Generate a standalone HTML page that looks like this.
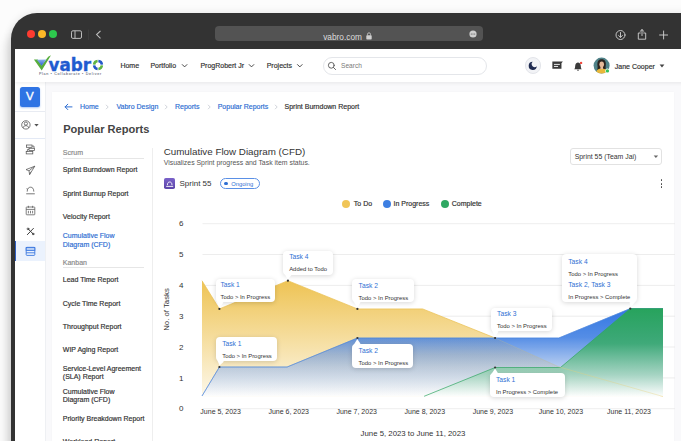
<!DOCTYPE html>
<html><head><meta charset="utf-8">
<style>
*{box-sizing:border-box;margin:0;padding:0}
html,body{width:681px;height:441px;overflow:hidden;background:#fcfcfc;font-family:"Liberation Sans",sans-serif;color:#333}
.abs{position:absolute}
#frame{position:absolute;left:11px;top:12.7px;width:700px;height:460px;background:#333;border-top-left-radius:26px;box-shadow:-5px 12px 9px rgba(0,0,0,.12),0 0 8px rgba(0,0,0,.10)}
#screen{position:absolute;left:15px;top:49px;width:670px;height:400px;background:#f9f9fb;overflow:hidden}
.t{position:absolute;white-space:nowrap;line-height:1;transform:translateY(calc(-50% + .2px))}
.f7{font-size:7px;-webkit-text-stroke:.18px currentColor}
.dot{position:absolute;border-radius:50%}
#hdr{position:absolute;left:0;top:0;width:670px;height:32.7px;background:#fff;box-shadow:0 1px 4px rgba(0,0,0,.08)}
#side{position:absolute;left:0;top:32px;width:30.6px;height:370px;background:#fff;border-right:1px solid #eef0f3}
#card{position:absolute;left:37px;top:39px;width:623px;height:370px}
#cardbg{position:absolute;left:36.5px;top:43px;width:622.3px;height:370px;background:#fff;box-shadow:0 0 2px rgba(0,0,0,.03)}
.blue{color:#2f6fd3}
.tip{position:absolute;background:#fff;border-radius:4px;box-shadow:0 1px 5px rgba(0,0,0,.16)}
.tip .a{position:absolute;font-size:6.7px;color:#2f6fd3;white-space:nowrap;line-height:1;transform:translateY(calc(-50% + .6px))}
.tip .b{position:absolute;font-size:5.9px;color:#333;white-space:nowrap;line-height:1;transform:translateY(calc(-50% + 1px))}
</style></head><body>
<div id="frame"></div>
<!-- browser chrome -->
<div class="dot" style="left:26.5px;top:30px;width:8px;height:8px;background:#fe3b30"></div>
<div class="dot" style="left:37.7px;top:30px;width:8px;height:8px;background:#fdb827"></div>
<div class="dot" style="left:48.9px;top:30px;width:8px;height:8px;background:#2dc84d"></div>
<svg class="abs" style="left:70px;top:29px" width="36" height="12" viewBox="0 0 36 12" fill="none" stroke="#bdbdbd" stroke-width="1">
<rect x="1.5" y="1.8" width="10" height="7.6" rx="1.4"/><line x1="5" y1="1.8" x2="5" y2="9.4"/>
<line x1="18.5" y1="0.5" x2="18.5" y2="11" stroke="#444" stroke-width=".6"/>
<polyline points="30.5,1.8 26.6,5.6 30.5,9.4" stroke-width="1.1"/>
</svg>
<div class="abs" style="left:214.5px;top:26px;width:268.5px;height:15px;border-radius:4px;background:#535353"></div>
<div class="t" style="left:323.2px;top:37.4px;font-size:8.3px;color:#dcdcdc">vabro.com</div>
<svg class="abs" style="left:366.3px;top:32px" width="6" height="8" viewBox="0 0 6 8"><rect x=".3" y="3.2" width="5.4" height="4.3" rx=".7" fill="#d0d0d0"/><path d="M1.5 3.4V2.3a1.5 1.5 0 0 1 3 0v1.1" fill="none" stroke="#d0d0d0" stroke-width=".8"/></svg>
<svg class="abs" style="left:469px;top:29.5px" width="8" height="8" viewBox="0 0 8 8"><circle cx="4" cy="4" r="3.6" fill="#cfcfcf"/><circle cx="2.3" cy="4" r=".55" fill="#535353"/><circle cx="4" cy="4" r=".55" fill="#535353"/><circle cx="5.7" cy="4" r=".55" fill="#535353"/></svg>
<svg class="abs" style="left:611px;top:27.5px" width="64" height="14" viewBox="0 0 64 14" fill="none" stroke="#d2d2d2" stroke-width=".9" stroke-linecap="round" stroke-linejoin="round">
<circle cx="9.5" cy="7" r="4.5"/><path d="M9.5 4.5v4.7M7.6 7.5l1.9 1.9 1.9-1.9"/>
<path d="M29.3 5h-2v6.2h7.4V5h-2M31 1.6v6M29.1 3.4L31 1.6l1.9 1.8"/>
<path d="M52.6 3v8M48.6 7h8"/>
</svg>

<div id="screen">
<div id="side">
  <!-- side coords: relative to side (x-15, y-81) -->
  <div class="abs" style="left:5px;top:5.7px;width:20px;height:20px;border-radius:2.5px;background:#2f74e4;box-shadow:0 1px 2px rgba(47,116,228,.4)"></div>
  <div class="t" style="left:10.9px;top:16.1px;font-size:11.5px;font-weight:normal;-webkit-text-stroke:.35px #fff;color:#fff">V</div>
  <div class="abs" style="left:0;top:29.8px;width:30px;height:1px;background:#e8ebf2"></div>
  <svg class="abs" style="left:5px;top:38px" width="22" height="12" viewBox="0 0 22 12" fill="none" stroke="#555" stroke-width=".8"><circle cx="5.9" cy="5.9" r="4.2"/><circle cx="5.9" cy="4.6" r="1.6"/><path d="M3 8.9 C3.4 7.2 4.6 6.7 5.9 6.7 C7.2 6.7 8.4 7.2 8.8 8.9"/><path d="M14.3 4.9 H18.7 L16.5 7.4 Z" fill="#555" stroke="none"/></svg>
  <div class="abs" style="left:0;top:57px;width:30px;height:1px;background:#e3e9f5"></div>
  <!-- icon1 gantt -->
  <svg class="abs" style="left:10px;top:62.5px" width="11" height="11" viewBox="0 0 11 11" fill="none" stroke="#555" stroke-width=".75"><rect x="1.6" y="1" width="5.4" height="2.3"/><rect x="4" y="4.3" width="5.6" height="2.3"/><rect x="1.2" y="7.6" width="6.6" height="2.3"/><path d="M7 2.1 H9 V4.3M4 5.4 H2.4 V7.6"/></svg>
  <!-- icon2 rocket -->
  <svg class="abs" style="left:10px;top:83.5px" width="11" height="11" viewBox="0 0 11 11" fill="none" stroke="#555" stroke-width=".75" stroke-linejoin="round"><path d="M9.8 1.2 L1 4.6 L4 5.8 L4.6 9.6 L9.8 1.2 Z M4 5.8 L9.8 1.2 M4.6 9.6 L5.6 6.8"/></svg>
  <!-- icon3 -->
  <svg class="abs" style="left:10px;top:103.6px" width="11" height="11" viewBox="0 0 11 11" fill="none" stroke="#555" stroke-width=".8"><path d="M2.4 4.6 L1.8 3.4 M2.2 6.6 C2.2 3.2 4 2.2 5.6 2.2 C7.4 2.2 8.8 3.6 8.8 6.6 M1.2 8.8 H9.8"/></svg>
  <!-- icon4 calendar -->
  <svg class="abs" style="left:10px;top:124px" width="11" height="11" viewBox="0 0 11 11" fill="none" stroke="#555" stroke-width=".75"><rect x="1.2" y="2" width="8.6" height="7.8" rx=".6"/><path d="M1.2 4.4 H9.8 M3.4 0.8 V2.8 M7.6 0.8 V2.8 M3.4 5.8 V8.4 M5.5 5.8 V8.4 M7.6 5.8 V8.4"/></svg>
  <!-- icon5 -->
  <svg class="abs" style="left:10.6px;top:145.6px" width="9" height="9" viewBox="0 0 9 9" fill="none" stroke="#3a3a3a" stroke-width="1" stroke-linecap="round"><path d="M1.4 7.6 L7.4 1.4 M2.4 2.2 L7.2 7"/><circle cx="2" cy="1.9" r=".9" stroke-width=".8"/><circle cx="7.1" cy="7" r=".8" stroke-width=".8"/></svg>
  <!-- active -->
  <div class="abs" style="left:0;top:159.8px;width:30px;height:20.4px;background:#ebf2fd"></div>
  <div class="abs" style="left:-1px;top:159.8px;width:2.3px;height:20.4px;background:#2f5fc4"></div>
  <svg class="abs" style="left:10px;top:165px" width="11" height="11" viewBox="0 0 11 11" fill="none" stroke="#3b78e0" stroke-width=".9"><rect x="1.2" y="1.4" width="8.6" height="8" rx=".8"/><rect x="1.2" y="1.4" width="8.6" height="3" fill="#b9d0f6"/><path d="M1.2 6.8 H9.8"/></svg>
 </div>
<div id="cardbg"></div>
<div id="card">
<svg class="abs" style="left:12px;top:15px" width="9" height="8" viewBox="0 0 9 8" fill="none" stroke="#2f6fd3" stroke-width="1" stroke-linecap="round" stroke-linejoin="round"><path d="M8 3.9 H1.2 M3.8 1.2 L1.1 3.9 L3.8 6.6"/></svg>
<div class="t f7 blue" style="left:28.0px;top:18.4px;">Home</div>
<div class="t f7 blue" style="left:64.4px;top:18.4px;">Vabro Design</div>
<div class="t f7 blue" style="left:123.0px;top:18.4px;">Reports</div>
<div class="t f7 blue" style="left:165.7px;top:18.4px;">Popular Reports</div>
<div class="t f7" style="left:232.5px;top:18.4px;">Sprint Burndown Report</div>
<svg class="abs" style="left:53.2px;top:15.9px" width="4" height="6" viewBox="0 0 4 6" fill="none" stroke="#c4c8d0" stroke-width=".8"><path d="M1 .8 L3.2 3 L1 5.2"/></svg>
<svg class="abs" style="left:112.3px;top:15.9px" width="4" height="6" viewBox="0 0 4 6" fill="none" stroke="#c4c8d0" stroke-width=".8"><path d="M1 .8 L3.2 3 L1 5.2"/></svg>
<svg class="abs" style="left:154.5px;top:15.9px" width="4" height="6" viewBox="0 0 4 6" fill="none" stroke="#c4c8d0" stroke-width=".8"><path d="M1 .8 L3.2 3 L1 5.2"/></svg>
<svg class="abs" style="left:221.8px;top:15.9px" width="4" height="6" viewBox="0 0 4 6" fill="none" stroke="#c4c8d0" stroke-width=".8"><path d="M1 .8 L3.2 3 L1 5.2"/></svg>
<div class="t " style="left:11.2px;top:41.1px;font-size:11.1px;font-weight:bold;color:#454545">Popular Reports</div>
<div class="t f7" style="left:10.8px;top:64.4px;color:#8a8a8a">Scrum</div>
<div class="abs" style="left:10.8px;top:70px;width:81px;height:1px;background:#e6e6e6"></div>
<div class="t f7" style="left:10.8px;top:81.4px;">Sprint Burndown Report</div>
<div class="t f7" style="left:10.8px;top:104.6px;">Sprint Burnup Report</div>
<div class="t f7" style="left:10.8px;top:127.9px;">Velocity Report</div>
<div class="t f7 blue" style="left:10.8px;top:147.2px;">Cumulative Flow</div>
<div class="t f7 blue" style="left:10.8px;top:155.7px;">Diagram (CFD)</div>
<div class="t f7" style="left:10.8px;top:173.8px;color:#8a8a8a">Kanban</div>
<div class="abs" style="left:10.8px;top:179.2px;width:81px;height:1px;background:#e6e6e6"></div>
<div class="t f7" style="left:10.8px;top:191.4px;">Lead Time Report</div>
<div class="t f7" style="left:10.8px;top:214.5px;">Cycle Time Report</div>
<div class="t f7" style="left:10.8px;top:237.8px;">Throughput Report</div>
<div class="t f7" style="left:10.8px;top:260.8px;">WIP Aging Report</div>
<div class="t f7" style="left:10.8px;top:279.7px;">Service-Level Agreement</div>
<div class="t f7" style="left:10.8px;top:288.1px;">(SLA) Report</div>
<div class="t f7" style="left:10.8px;top:303.0px;">Cumulative Flow</div>
<div class="t f7" style="left:10.8px;top:311.3px;">Diagram (CFD)</div>
<div class="t f7" style="left:10.8px;top:330.4px;">Priority Breakdown Report</div>
<div class="t f7" style="left:10.8px;top:353.3px;">Workload Report</div>
<div class="abs" style="left:99.6px;top:60px;width:1px;height:340px;background:#eeeeee"></div>
<div class="t " style="left:111.7px;top:64.2px;font-size:9.8px;color:#333">Cumulative Flow Diagram (CFD)</div>
<div class="t " style="left:111.7px;top:75.0px;font-size:6.9px;color:#555">Visualizes Sprint progress and Task item status.</div>
<div class="abs" style="left:111.8px;top:90.2px;width:11.1px;height:11px;border-radius:1.8px;background:linear-gradient(#7a62c9,#5b44a8)"></div>
<svg class="abs" style="left:111.7px;top:90.5px" width="11.3" height="10.6" viewBox="0 0 11.3 10.6" fill="none" stroke="#fff" stroke-width=".9"><path d="M3.4 6.2 C3.4 3.8 4.4 3 5.7 3 C7 3 8 3.8 8 6.2 M2.2 7.4 H9.2"/></svg>
<div class="t " style="left:127.5px;top:96.0px;font-size:8px;color:#333">Sprint 55</div>
<div class="abs" style="left:168px;top:89.9px;width:40px;height:11.4px;border:.8px solid #5a90e6;border-radius:6px"></div>
<div class="dot" style="left:172.3px;top:93.6px;width:3.8px;height:3.8px;background:#2f6fd3"></div>
<div class="t " style="left:179.2px;top:96.9px;font-size:5.8px;color:#2f6fd3">Ongoing</div>
<div class="abs" style="left:518px;top:59.5px;width:92.4px;height:17.5px;border:1px solid #e2e2e2;border-radius:3px"></div>
<div class="t " style="left:522.7px;top:69.0px;font-size:6.9px;color:#333">Sprint 55 (Team Jai)</div>
<svg class="abs" style="left:601px;top:66.6px" width="6" height="4" viewBox="0 0 6 4"><path d="M0.7 0.6 H5.1 L2.9 3.1 Z" fill="#666"/></svg>
<div class="dot" style="left:290.3px;top:112.2px;width:8px;height:8px;background:#f0c557"></div>
<div class="dot" style="left:330.7px;top:112.2px;width:8px;height:8px;background:#3d7fe2"></div>
<div class="dot" style="left:389.0px;top:112.2px;width:8px;height:8px;background:#2fa862"></div>
<div class="t f7" style="left:301.8px;top:115.4px;">To Do</div>
<div class="t f7" style="left:341.5px;top:115.4px;">In Progress</div>
<div class="t f7" style="left:399.8px;top:115.4px;">Complete</div>
<div class="dot" style="left:608.65px;top:91.45px;width:1.7px;height:1.7px;background:#444"></div>
<div class="dot" style="left:608.65px;top:94.95px;width:1.7px;height:1.7px;background:#444"></div>
<div class="dot" style="left:608.65px;top:98.45px;width:1.7px;height:1.7px;background:#444"></div>
<!--CHART-->
<svg class="abs" style="left:0;top:0" width="623" height="353" viewBox="52 88 623 353" font-family="Liberation Sans, sans-serif">
<defs>
<linearGradient id="gy" x1="0" y1="280" x2="0" y2="397" gradientUnits="userSpaceOnUse"><stop offset="0" stop-color="#eec353"/><stop offset="1" stop-color="#fdf8ea"/></linearGradient>
<linearGradient id="gy2" x1="0" y1="337" x2="0" y2="397" gradientUnits="userSpaceOnUse"><stop offset="0" stop-color="#d9bc78" stop-opacity=".08"/><stop offset=".3" stop-color="#d9bc78" stop-opacity=".2"/><stop offset="1" stop-color="#f4e2b0" stop-opacity="0"/></linearGradient>
<linearGradient id="gb" x1="0" y1="308" x2="0" y2="397" gradientUnits="userSpaceOnUse"><stop offset="0" stop-color="#3076e2" stop-opacity="1"/><stop offset=".33" stop-color="#4a86e4" stop-opacity=".94"/><stop offset=".66" stop-color="#a9c4ee" stop-opacity=".85"/><stop offset="1" stop-color="#ffffff" stop-opacity=".9"/></linearGradient>
<linearGradient id="gg" x1="0" y1="308" x2="0" y2="397" gradientUnits="userSpaceOnUse"><stop offset="0" stop-color="#27a35c" stop-opacity="1"/><stop offset=".4" stop-color="#3cab70" stop-opacity=".92"/><stop offset=".75" stop-color="#9fd3ba" stop-opacity=".85"/><stop offset="1" stop-color="#ffffff" stop-opacity=".8"/></linearGradient>
</defs>
<line x1="202.5" y1="223.7" x2="675" y2="223.7" stroke="#e9e9e9" stroke-width=".8"/>
<text x="181.2" y="226.3" font-size="8" fill="#333" text-anchor="middle">6</text>
<line x1="202.5" y1="254.5" x2="675" y2="254.5" stroke="#e9e9e9" stroke-width=".8"/>
<text x="181.2" y="257.1" font-size="8" fill="#333" text-anchor="middle">5</text>
<line x1="202.5" y1="285.4" x2="675" y2="285.4" stroke="#e9e9e9" stroke-width=".8"/>
<text x="181.2" y="288.0" font-size="8" fill="#333" text-anchor="middle">4</text>
<line x1="202.5" y1="316.2" x2="675" y2="316.2" stroke="#e9e9e9" stroke-width=".8"/>
<text x="181.2" y="318.8" font-size="8" fill="#333" text-anchor="middle">3</text>
<line x1="202.5" y1="347.0" x2="675" y2="347.0" stroke="#e9e9e9" stroke-width=".8"/>
<text x="181.2" y="349.6" font-size="8" fill="#333" text-anchor="middle">2</text>
<line x1="202.5" y1="377.9" x2="675" y2="377.9" stroke="#e9e9e9" stroke-width=".8"/>
<text x="181.2" y="380.5" font-size="8" fill="#333" text-anchor="middle">1</text>
<line x1="202.5" y1="408.7" x2="675" y2="408.7" stroke="#e9e9e9" stroke-width=".8"/>
<text x="181.2" y="411.3" font-size="8" fill="#333" text-anchor="middle">0</text>
<text transform="translate(169.3,309.5) rotate(-90)" font-size="7.75" fill="#333" text-anchor="middle">No. of Tasks</text>
<polygon points="202,280.7 219.4,308.9 287.9,280.7 357.4,308.9 422.6,308.9 495.1,338 558.6,366.8 663,396.5 663,396.5 202,396.5" fill="url(#gy)"/>
<polyline points="202,280.7 219.4,308.9 287.9,280.7 357.4,308.9 422.6,308.9 495.1,338 558.6,366.8 663,396.5" fill="none" stroke="#e9bf4f" stroke-width=".7"/>
<polygon points="202,396 219.4,367 287.1,367 357.4,338 558.8,338 630.3,308.6 663,308.6 663,396.5 202,396.5" fill="url(#gb)"/>
<polyline points="202,396 219.4,367 287.1,367 357.4,338 558.8,338 630.3,308.6 663,308.6" fill="none" stroke="#4a84dc" stroke-width=".5"/>
<clipPath id="cb"><polygon points="202,396 219.4,367 287.1,367 357.4,338 558.8,338 630.3,308.6 663,308.6 663,396.5 202,396.5"/></clipPath>
<polygon points="202,280.7 219.4,308.9 287.9,280.7 357.4,308.9 422.6,308.9 495.1,338 558.6,366.8 663,396.5 663,396.5 202,396.5" fill="url(#gy2)" clip-path="url(#cb)"/>
<polyline points="202,396 219.4,367 287.1,367 357.4,338 558.8,338 630.3,308.6 663,308.6" fill="none" stroke="#4a84dc" stroke-width=".5"/>
<polygon points="424.1,396.3 495.1,367.5 560.5,367.5 630.3,308.6 663,308.6 663,396.5" fill="url(#gg)"/>
<polyline points="424.1,396.3 495.1,367.5 560.5,367.5 630.3,308.6 663,308.6" fill="none" stroke="#2fa561" stroke-width=".7"/>
<polyline points="495.1,338 558.6,366.8" fill="none" stroke="#c9c3a0" stroke-width=".5" stroke-opacity=".55"/>
<polyline points="558.6,366.8 663,396.5" fill="none" stroke="#e6d27f" stroke-width=".5" stroke-opacity=".75"/>
<circle cx="219.4" cy="308.9" r="1.1" fill="#333"/>
<circle cx="219.4" cy="367" r="1.1" fill="#333"/>
<circle cx="287.9" cy="280.7" r="1.1" fill="#333"/>
<circle cx="357.4" cy="308.9" r="1.1" fill="#333"/>
<circle cx="357.4" cy="338" r="1.1" fill="#333"/>
<circle cx="495.1" cy="338" r="1.1" fill="#333"/>
<circle cx="495.1" cy="367.5" r="1.1" fill="#333"/>
<circle cx="630.3" cy="308.6" r="1.1" fill="#333"/>
<text x="220.6" y="413.6" font-size="7" fill="#333" text-anchor="middle">June 5, 2023</text>
<text x="288.7" y="413.6" font-size="7" fill="#333" text-anchor="middle">June 6, 2023</text>
<text x="356.7" y="413.6" font-size="7" fill="#333" text-anchor="middle">June 7, 2023</text>
<text x="424.8" y="413.6" font-size="7" fill="#333" text-anchor="middle">June 8, 2023</text>
<text x="492.9" y="413.6" font-size="7" fill="#333" text-anchor="middle">June 9, 2023</text>
<text x="560.9" y="413.6" font-size="7" fill="#333" text-anchor="middle">June 10, 2023</text>
<text x="629.0" y="413.6" font-size="7" fill="#333" text-anchor="middle">June 11, 2023</text>
<text x="413" y="436" font-size="7.8" fill="#333" text-anchor="middle">June 5, 2023 to June 11, 2023</text>
</svg>
<div class="tip" style="left:163.6px;top:190.6px;width:59.4px;height:23.8px"><div class="a" style="left:4.9px;top:6.9px">Task 1</div><div class="b" style="left:4.9px;top:18.5px">Todo &gt; In Progress</div></div>
<div class="tip" style="left:164.1px;top:248.8px;width:60.9px;height:24.6px"><div class="a" style="left:6.1px;top:7.5px">Task 1</div><div class="b" style="left:6.1px;top:19.3px">Todo &gt; In Progress</div></div>
<div class="tip" style="left:231.2px;top:162.6px;width:50.0px;height:24.3px"><div class="a" style="left:6.0px;top:6.8px">Task 4</div><div class="b" style="left:6.0px;top:18.8px">Added to Todo</div></div>
<div class="tip" style="left:300.1px;top:190.6px;width:61.9px;height:23.7px"><div class="a" style="left:6.5px;top:7.1px">Task 2</div><div class="b" style="left:6.5px;top:19.1px">Todo &gt; In Progress</div></div>
<div class="tip" style="left:300.1px;top:255.8px;width:61.2px;height:24.3px"><div class="a" style="left:6.5px;top:7.2px">Task 2</div><div class="b" style="left:6.5px;top:19.1px">Todo &gt; In Progress</div></div>
<div class="tip" style="left:438.7px;top:219.6px;width:61.4px;height:23.8px"><div class="a" style="left:6.4px;top:6.7px">Task 3</div><div class="b" style="left:6.4px;top:18.6px">Todo &gt; In Progress</div></div>
<div class="tip" style="left:437.5px;top:285.3px;width:75.0px;height:23.8px"><div class="a" style="left:6.5px;top:7.2px">Task 1</div><div class="b" style="left:6.5px;top:19.1px">In Progress &gt; Complete</div></div>
<div class="tip" style="left:509.9px;top:166.2px;width:75.6px;height:48.2px"><div class="a" style="left:6.4px;top:7.5px">Task 4</div><div class="b" style="left:6.4px;top:19.9px">Todo &gt; In Progress</div><div class="a" style="left:6.4px;top:31.1px">Task 2, Task 3</div><div class="b" style="left:6.4px;top:43.1px">In Progress &gt; Complete</div></div>
<svg class="abs" style="left:0;top:0" width="623" height="353" viewBox="52 88 623 353">
<polygon points="216,299.5 223.5,302.4 219.4,307.8" fill="#fff"/>
<polygon points="216.5,358.5 224,361.4 219.6,365.6" fill="#fff"/>
<polygon points="283.6,272 291.5,274.9 287.8,279.6" fill="#fff"/>
<polygon points="352.5,299.5 360.5,302.3 357.3,307.8" fill="#fff"/>
<polygon points="352.5,346.7 360.5,343.8 357.3,339" fill="#fff"/>
<polygon points="491.1,328.5 498.5,331.4 495.1,337" fill="#fff"/>
<polygon points="489.9,376.3 498,373.3 495.1,368.6" fill="#fff"/>
<polygon points="637.1,299.5 629.5,302.4 630.7,307.4" fill="#fff"/>
</svg>
<!--/CHART-->
</div>
<div id="hdr">
  <!-- logo: coordinates relative to screen (subtract 15,49) -->
  <svg class="abs" style="left:17px;top:4px" width="22" height="20" viewBox="0 0 22 20">
    <defs><linearGradient id="lg1" x1="0" y1="0" x2="0" y2="1"><stop offset="0" stop-color="#8fb4ee"/><stop offset="1" stop-color="#2a5fcf"/></linearGradient></defs>
    <path d="M1.9 6.6 L5.8 6.4 L9.6 12.4 L16.2 3.8 L19 2.2 L9.7 17.4 Z" fill="#57ad3c"/>
    <path d="M4.8 6.8 L14.4 6.4 L9.6 12.8 Z" fill="url(#lg1)"/>
  </svg>
  <div class="abs" style="left:33.6px;top:5.9px;font-family:'DejaVu Sans','Liberation Sans',sans-serif;font-weight:bold;font-size:16.8px;line-height:20px;color:#1f5bd0;-webkit-text-stroke:.35px #1f5bd0">vabr</div>
  <svg class="abs" style="left:76.5px;top:10.2px" width="12" height="12" viewBox="0 0 12 12" fill="none" stroke-width="2.5">
    <path d="M2.1 5.6 A3.9 3.9 0 0 1 5.6 2.1" stroke="#5fb444"/>
    <path d="M6.4 2.1 A3.9 3.9 0 0 1 9.9 5.6" stroke="#2458c8"/>
    <path d="M9.9 6.4 A3.9 3.9 0 0 1 6.4 9.9" stroke="#5fb444"/>
    <path d="M5.6 9.9 A3.9 3.9 0 0 1 2.1 6.4" stroke="#2458c8"/>
  </svg>
  <div class="t" style="left:23.9px;top:26.4px;font-size:3.7px;color:#3c445a;letter-spacing:.66px">Plan • Collaborate • Deliver</div>
  <div class="t f7" style="left:105.4px;top:16.3px">Home</div>
  <div class="t f7" style="left:135.4px;top:16.3px">Portfolio</div>
  <div class="t f7" style="left:185.4px;top:16.3px">ProgRobert Jr</div>
  <div class="t f7" style="left:251.7px;top:16.3px">Projects</div>
  <svg class="abs" style="left:166px;top:13.2px" width="130" height="8" viewBox="0 0 130 8" fill="none" stroke="#333" stroke-width=".9" stroke-linecap="round" stroke-linejoin="round">
    <polyline points="1.3,2.6 3.6,4.9 5.9,2.6"/><polyline points="68.2,2.6 70.5,4.9 72.8,2.6"/><polyline points="116.5,2.6 118.8,4.9 121.1,2.6"/>
  </svg>
  <div class="abs" style="left:308px;top:8.3px;width:164px;height:17.3px;border:1px solid #e4e6ea;border-radius:9px;background:#fff"></div>
  <svg class="abs" style="left:312px;top:12px" width="10" height="10" viewBox="0 0 10 10" fill="none" stroke="#555" stroke-width=".9" stroke-linecap="round"><circle cx="4.3" cy="4.3" r="2.9"/><line x1="6.5" y1="6.5" x2="8.6" y2="8.6"/></svg>
  <div class="t" style="left:326px;top:16.5px;font-size:6.6px;color:#7a7a7a">Search</div>
  <!-- moon -->
  <div class="abs" style="left:509.5px;top:8.3px;width:16.4px;height:16.4px;border-radius:50%;background:#f2f3f6;border:1px solid #e3e5ea"></div>
  <svg class="abs" style="left:513px;top:12px" width="9.5" height="9.5" viewBox="0 0 10 10"><path d="M5 0.9 A4.3 4.3 0 1 0 9.3 5.6 A3 3 0 0 1 5 0.9 Z" fill="#1f2b50"/></svg>
  <!-- message -->
  <svg class="abs" style="left:536.8px;top:12.3px" width="11.6" height="9" viewBox="0 0 13 10"><path d="M0.4 0.5 H12.2 L10.6 2.4 V8.7 H0.4 Z" fill="#3a3a3a"/><rect x="2.2" y="3.2" width="6.6" height="1" fill="#fff"/><rect x="2.2" y="5.5" width="4.6" height="1" fill="#fff"/></svg>
  <!-- bell -->
  <svg class="abs" style="left:558px;top:11.5px" width="11" height="11" viewBox="0 0 11 11"><path d="M1.2 8.2 C2.3 7.2 2 5.6 2.3 4.2 C2.6 2.4 3.7 1.4 5 1.4 C6.3 1.4 7.4 2.4 7.7 4.2 C8 5.6 7.7 7.2 8.8 8.2 Z" fill="#3a3a3a"/><path d="M4 8.8 a1 1 0 0 0 2 0Z" fill="#3a3a3a"/><circle cx="8.1" cy="1.9" r="1.2" fill="#f0483e"/></svg>
  <!-- avatar -->
  <svg class="abs" style="left:577.5px;top:8px" width="18" height="18" viewBox="0 0 18 18">
    <defs><clipPath id="av"><circle cx="8.6" cy="8.6" r="8"/></clipPath></defs>
    <circle cx="8.6" cy="8.6" r="8" fill="#4f8288"/>
    <g clip-path="url(#av)">
      <path d="M4.6 9.5 C3.6 4 6 2.2 8.8 2.2 C11.8 2.2 13.6 4.6 12.6 9.8 L12.8 13 H4.4 Z" fill="#2b2420"/>
      <ellipse cx="8.7" cy="7.3" rx="2.3" ry="2.9" fill="#e6b999"/>
      <path d="M2.6 17.5 C3 12.6 6 11.6 8.7 11.6 C11.4 11.6 14.4 12.6 14.8 17.5 Z" fill="#e9b83a"/>
      <path d="M7.4 9.6 h2.6 v2.6 h-2.6z" fill="#e6b999"/>
    </g>
    <circle cx="14.4" cy="13.9" r="2.3" fill="#fff"/><circle cx="14.4" cy="13.9" r="1.7" fill="#36c25a"/>
  </svg>
  <div class="t f7" style="left:599.8px;top:16.5px;color:#333">Jane Cooper</div>
  <svg class="abs" style="left:644px;top:14.5px" width="6" height="4" viewBox="0 0 6 4"><path d="M0.6 0.6 H5.4 L3 3.4 Z" fill="#444"/></svg>
 </div>
</div>
</body></html>
